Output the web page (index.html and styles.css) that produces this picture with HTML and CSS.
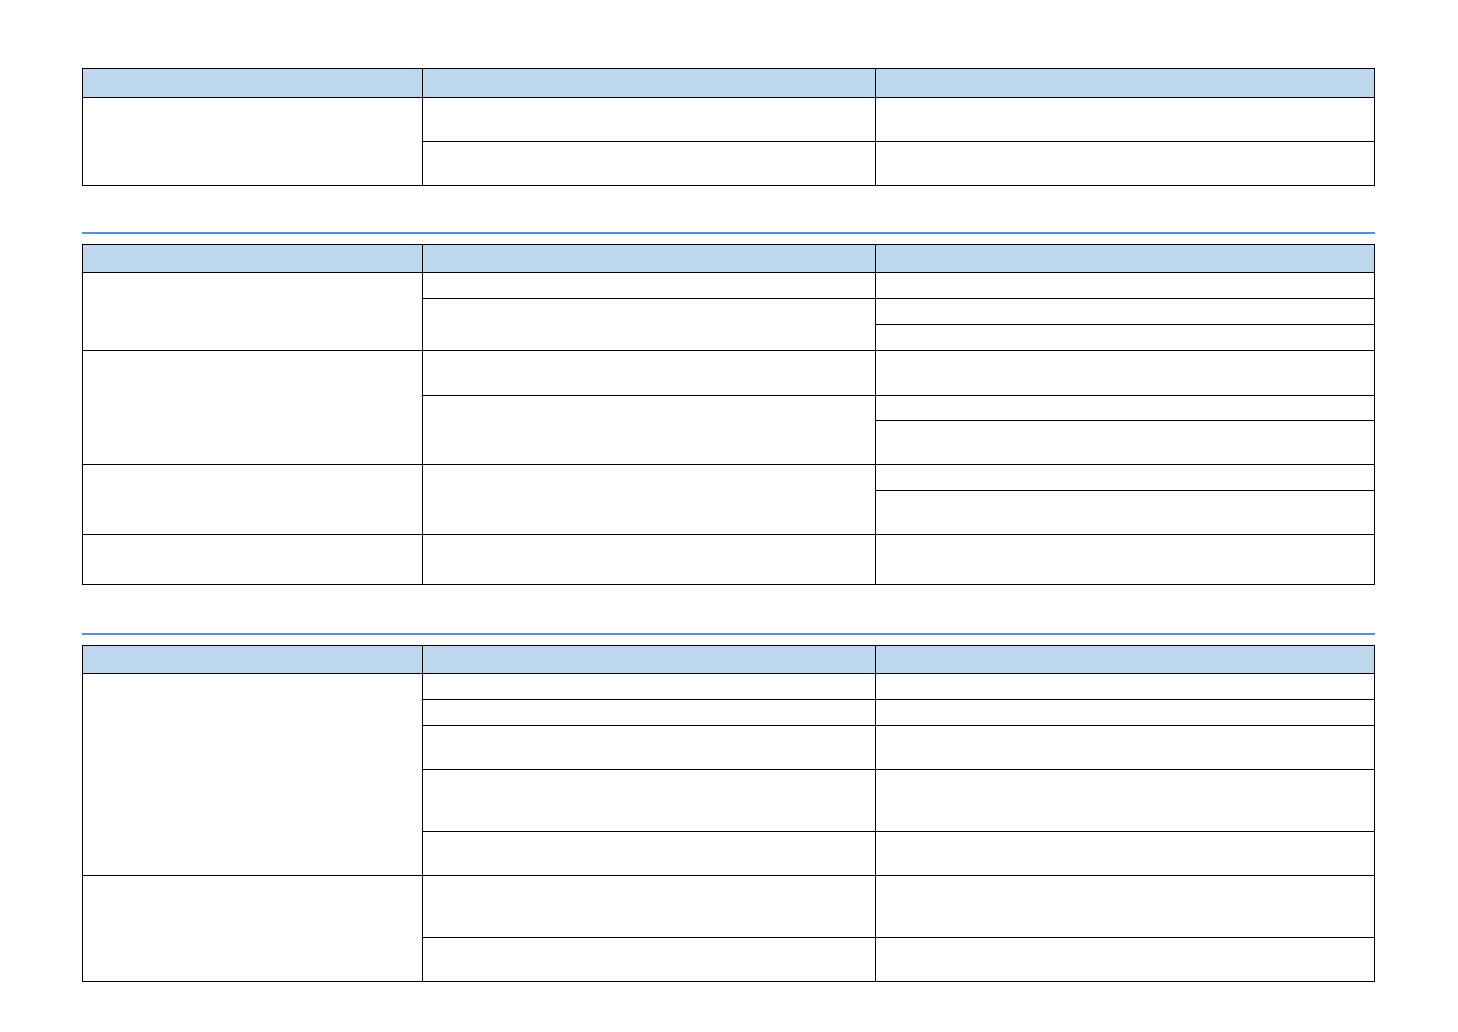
FILE: index.html
```html
<!DOCTYPE html>
<html lang="en">
<head>
<meta charset="utf-8">
<title>Tables</title>
<link rel="stylesheet" href="styles.css">
</head>
<body>
<main class="page">
  <section class="tbl t1">
    <div class="cell hd"></div><div class="cell hd"></div><div class="cell hd"></div>
    <div class="cell c1 s2"></div><div class="cell c2"></div><div class="cell c3"></div>
    <div class="cell c2"></div><div class="cell c3"></div>
  </section>

  <hr class="rule">

  <section class="tbl t2">
    <div class="cell hd"></div><div class="cell hd"></div><div class="cell hd"></div>
    <div class="cell c1 s3"></div><div class="cell c2"></div><div class="cell c3"></div>
    <div class="cell c2 s2"></div><div class="cell c3"></div>
    <div class="cell c3"></div>
    <div class="cell c1 s3"></div><div class="cell c2"></div><div class="cell c3"></div>
    <div class="cell c2 s2"></div><div class="cell c3"></div>
    <div class="cell c3"></div>
    <div class="cell c1 s2"></div><div class="cell c2 s2"></div><div class="cell c3"></div>
    <div class="cell c3"></div>
    <div class="cell c1"></div><div class="cell c2"></div><div class="cell c3"></div>
  </section>

  <hr class="rule rule-low">

  <section class="tbl t3">
    <div class="cell hd"></div><div class="cell hd"></div><div class="cell hd"></div>
    <div class="cell c1 s5"></div><div class="cell c2"></div><div class="cell c3"></div>
    <div class="cell c2"></div><div class="cell c3"></div>
    <div class="cell c2"></div><div class="cell c3"></div>
    <div class="cell c2"></div><div class="cell c3"></div>
    <div class="cell c2"></div><div class="cell c3"></div>
    <div class="cell c1 s2"></div><div class="cell c2"></div><div class="cell c3"></div>
    <div class="cell c2"></div><div class="cell c3"></div>
  </section>
</main>
</body>
</html>
```

FILE: styles.css
```css
html, body {
  margin: 0;
  padding: 0;
  background: #ffffff;
  font-family: "Liberation Sans", Arial, sans-serif;
}

.page {
  padding: 68px 0 0 82px;
  width: 1293px;
}

.tbl {
  display: grid;
  grid-template-columns: 339px 452px 498px;
  gap: 1px;
  background: #000000;
  border: 1px solid #000000;
}

.cell {
  background: #ffffff;
}

.cell.hd {
  background: #bdd7ee;
}

.c1 { grid-column: 1; }
.c2 { grid-column: 2; }
.c3 { grid-column: 3; }
.s2 { grid-row: span 2; }
.s3 { grid-row: span 3; }
.s5 { grid-row: span 5; }

.t1 {
  grid-template-rows: 28px 43px 43px;
}

.t2 {
  grid-template-rows: 27px 25px 25px 25px 44px 24px 43px 25px 43px 49px;
}

.t3 {
  grid-template-rows: 27px 25px 25px 43px 61px 43px 61px 43px;
}

.rule {
  border: 0;
  height: 2px;
  background: #5b8fd5;
  margin: 46px 0 10px 0;
}

.rule-low {
  margin-top: 48px;
}
```
